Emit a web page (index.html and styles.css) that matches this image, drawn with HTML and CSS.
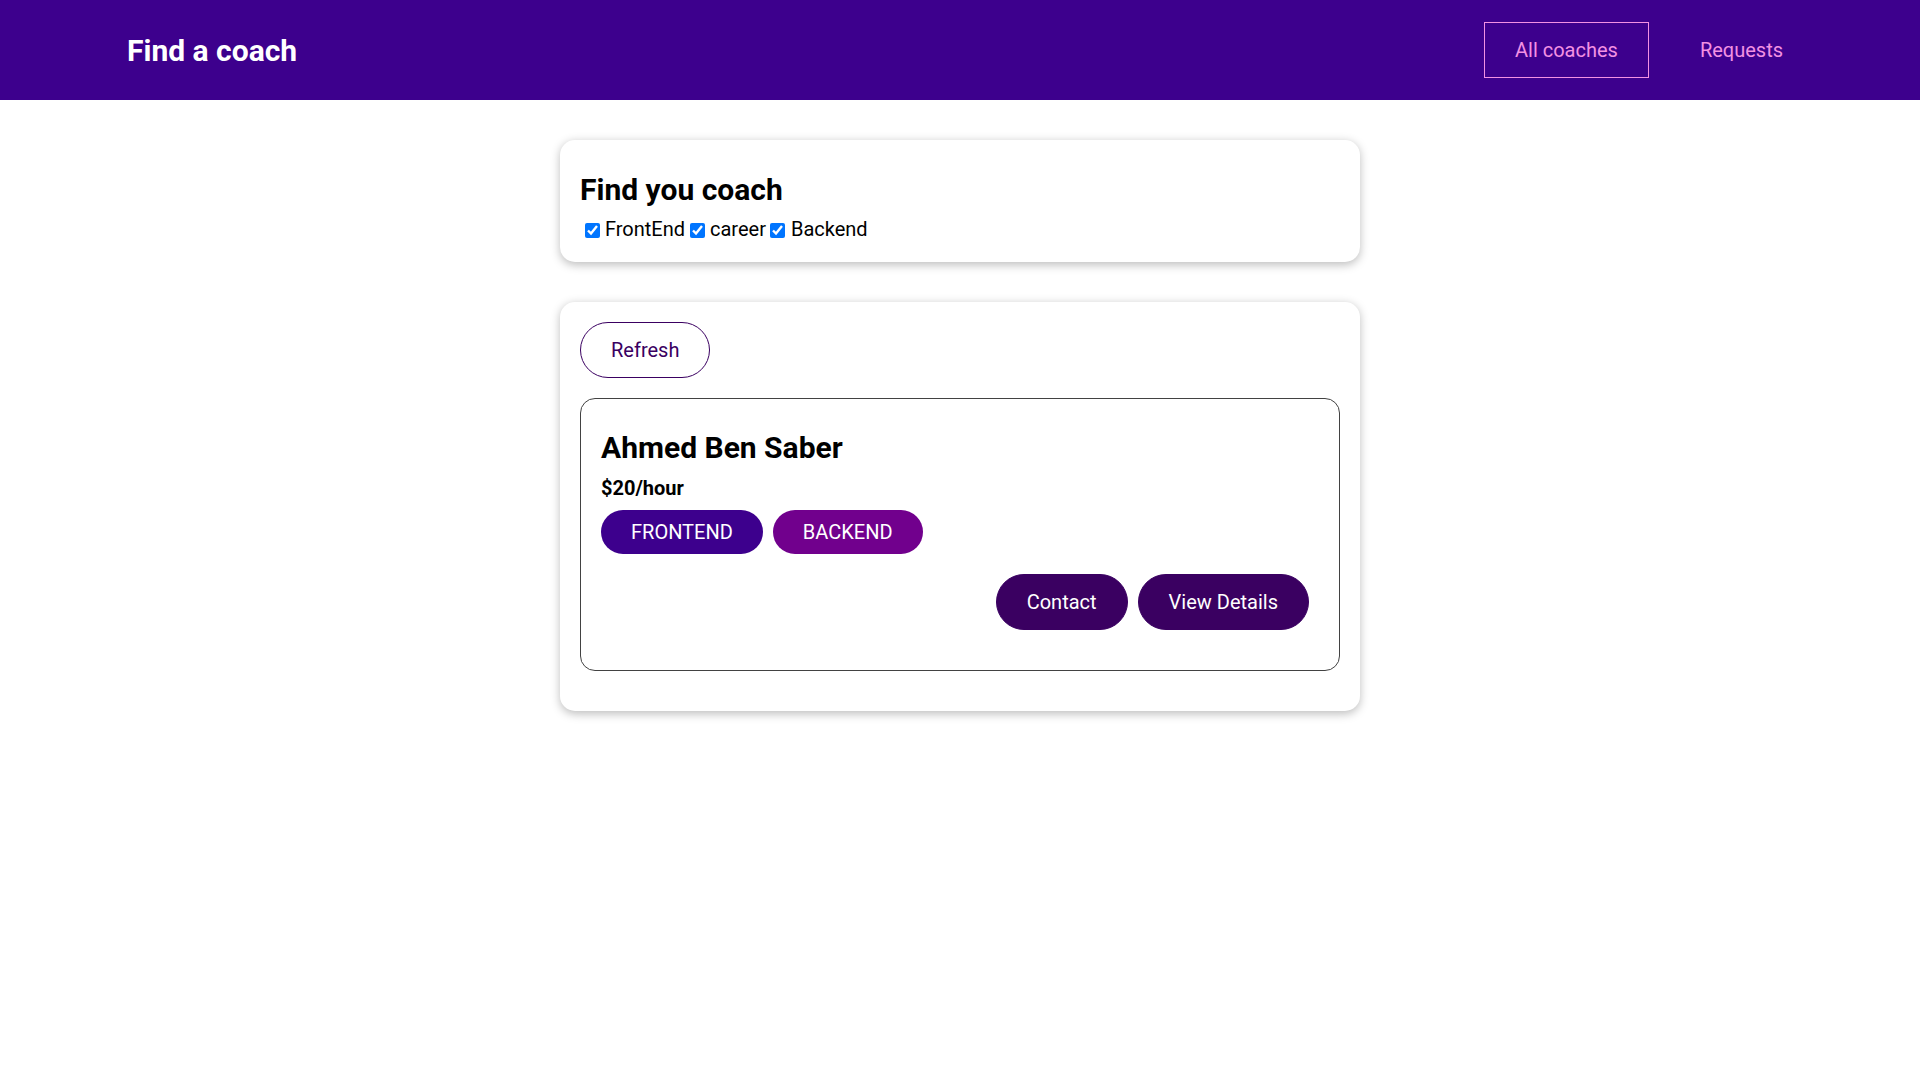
FILE: index.html
```
<!DOCTYPE html>
<html lang="en">
<head>
<meta charset="utf-8">
<title>Find a coach</title>
<link rel="stylesheet" href="styles.css">
</head>
<body>
<header class="site-header">
  <nav class="nav">
    <h1 class="brand"><a class="brand-link" href="#">Find a coach</a></h1>
    <ul class="nav-list">
      <li class="nav-item"><a class="nav-link active" href="#">All coaches</a></li>
      <li class="nav-item"><a class="nav-link" href="#">Requests</a></li>
    </ul>
  </nav>
</header>
<main class="main">
  <section class="card filter-card">
    <h2 class="filter-title">Find you coach</h2>
    <div class="filter-row"><span class="filter-option"><input class="check" type="checkbox" id="frontend" checked> <label class="check-label" for="frontend">FrontEnd</label></span><span class="filter-option"><input class="check" type="checkbox" id="career" checked> <label class="check-label" for="career">career</label></span><span class="filter-option"><input class="check" type="checkbox" id="backend" checked> <label class="check-label" for="backend">Backend</label></span></div>
  </section>
  <section class="card list-card">
    <div class="controls">
      <button class="btn btn-outline" type="button">Refresh</button>
    </div>
    <ul class="coach-list">
      <li class="coach-item">
        <h3 class="coach-name">Ahmed Ben Saber</h3>
        <h4 class="coach-rate">$20/hour</h4>
        <div class="badges">
          <span class="badge badge-frontend">FRONTEND</span>
          <span class="badge badge-backend">BACKEND</span>
        </div>
        <div class="actions">
          <a class="btn btn-solid" href="#">Contact</a>
          <a class="btn btn-solid" href="#">View Details</a>
        </div>
      </li>
    </ul>
  </section>
</main>
</body>
</html>
```
FILE: styles.css
```
* {
  box-sizing: border-box;
}

html {
  font-family: Roboto, "Noto Sans", sans-serif;
  font-size: 20px;
}

body {
  margin: 0;
  background: #ffffff;
  color: #000000;
}

.site-header {
  height: 100px;
  background-color: #3d008d;
  display: flex;
  justify-content: center;
  align-items: center;
}

.nav {
  width: 90%;
  margin: auto;
  display: flex;
  justify-content: space-between;
  align-items: center;
}

.brand {
  margin: 0;
  font-size: 30px;
  font-weight: 700;
  line-height: 35px;
}

.brand-link {
  display: inline-block;
  color: #ffffff;
  text-decoration: none;
  padding: 15px 30px;
  border: 1px solid transparent;
}

.nav-list {
  list-style: none;
  margin: 0;
  padding: 0;
  display: flex;
  align-items: center;
}

.nav-item {
  margin: 0 10px;
}

.nav-link {
  display: inline-block;
  color: #f391e3;
  text-decoration: none;
  font-size: 20px;
  line-height: 24px;
  padding: 15px 30px;
  border: 1px solid transparent;
}

.nav-link.active {
  border-color: #f391e3;
}

.main {
  display: block;
}

.card {
  border-radius: 15px;
  box-shadow: 0 2.5px 10px rgba(0, 0, 0, 0.26);
  padding: 20px;
  margin: 40px auto;
  max-width: 800px;
  background: #ffffff;
}

.filter-title {
  font-size: 30px;
  font-weight: 700;
  line-height: 35.2px;
  margin: 12px 0 10.5px;
}

.filter-row {
  font-size: 20px;
  line-height: 23.4px;
  height: 24.4px;
}

.filter-option {
  white-space: nowrap;
}

.check {
  width: 15px;
  height: 15px;
  margin: 3px 0.5px 3px 4.5px;
  vertical-align: -2px;
  accent-color: #0075ff;
}

.check-label {
  color: #000000;
}

.controls {
  display: flex;
  justify-content: space-between;
}

.btn {
  font-family: Roboto, "Noto Sans", sans-serif;
  font-size: 20px;
  line-height: 24px;
  padding: 15px 30px;
  border-radius: 30px;
  border: 1px solid #3a0061;
  cursor: pointer;
  text-decoration: none;
  display: inline-block;
}

.btn-outline {
  background: transparent;
  color: #3a0061;
}

.btn-solid {
  background: #3a0061;
  color: #ffffff;
}

.coach-list {
  list-style: none;
  margin: 0;
  padding: 0;
}

.coach-item {
  margin: 20px 0;
  border: 1px solid #424242;
  border-radius: 15px;
  padding: 20px;
}

.coach-name {
  font-size: 30px;
  font-weight: 700;
  line-height: 35.2px;
  margin: 10.5px 0 12px;
}

.coach-rate {
  font-size: 20px;
  font-weight: 700;
  line-height: 23.4px;
  margin: 0 0 10.2px;
}

.badges {
  display: flex;
  gap: 10px;
}

.badge {
  display: inline-block;
  border-radius: 30px;
  padding: 10px 30px;
  font-size: 20px;
  line-height: 24px;
  color: #ffffff;
  background-color: #cccccc;
}

.badge-frontend {
  background-color: #3d008d;
}

.badge-backend {
  background-color: #71008d;
}

.actions {
  display: flex;
  justify-content: flex-end;
  gap: 10px;
  padding-right: 10px;
  margin: 20px 0;
}
```
